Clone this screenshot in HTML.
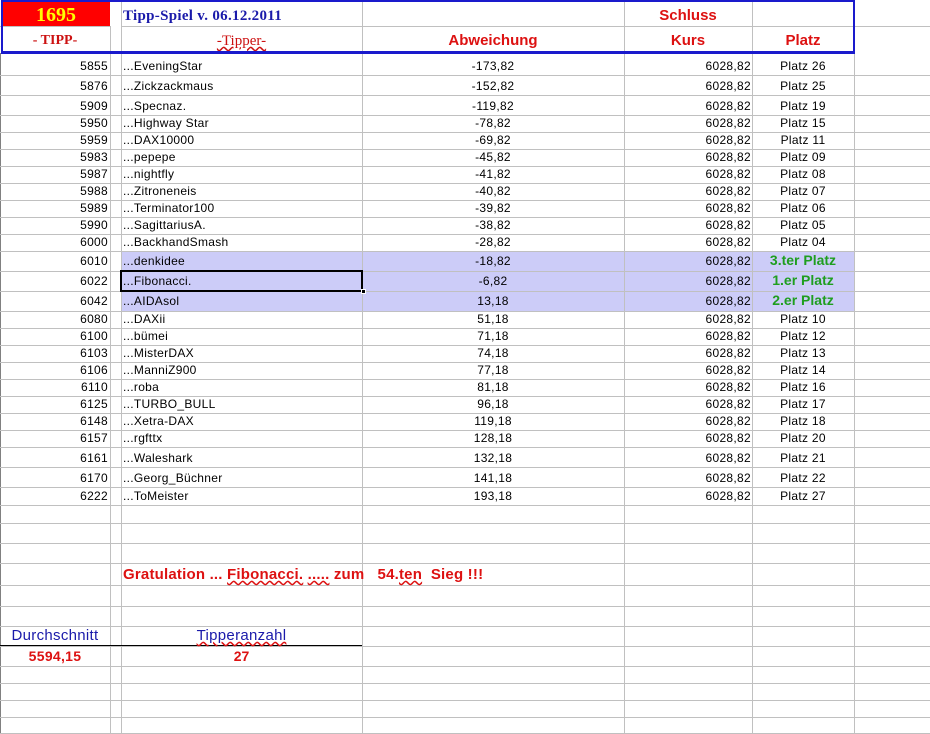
<!DOCTYPE html>
<html><head><meta charset="utf-8">
<style>
*{margin:0;padding:0;box-sizing:border-box}
body{width:930px;height:734px;background:#fff;position:relative;overflow:hidden;font-family:"Liberation Sans",Arial,sans-serif;font-size:12px;color:#000}
.h{position:absolute;left:0;width:930px;height:1px;background:#c0c0c0}
.v{position:absolute;top:0;width:1px;height:734px;background:#c0c0c0}
.r{position:absolute;left:0;width:930px;letter-spacing:0.3px}
.r span{position:absolute;top:0;white-space:nowrap}
.a{left:0;width:108px;text-align:right}
.b{left:123px}
.c{left:362px;width:262px;text-align:center}
.d{left:624px;width:127px;text-align:right}
.e{left:752px;width:102px;text-align:center}
.g{color:#1f9e1f;font-weight:bold;font-size:14px;letter-spacing:0}
.hl{position:absolute;left:121px;top:251px;width:733px;height:60px;background:#ccccf8}
</style></head><body>
<div class="hl"></div>
<div class="v" style="left:110px"></div>
<div class="v" style="left:121px"></div>
<div class="v" style="left:362px"></div>
<div class="v" style="left:624px"></div>
<div class="v" style="left:752px"></div>
<div class="v" style="left:854px"></div>
<div class="v" style="left:0;background:#808080"></div>

<div class="h" style="top:26px"></div>
<div class="h" style="top:75px"></div><div class="h" style="top:95px"></div><div class="h" style="top:115px"></div>
<div class="h" style="top:132px"></div><div class="h" style="top:149px"></div><div class="h" style="top:166px"></div>
<div class="h" style="top:183px"></div><div class="h" style="top:200px"></div><div class="h" style="top:217px"></div>
<div class="h" style="top:234px"></div><div class="h" style="top:251px"></div><div class="h" style="top:271px"></div>
<div class="h" style="top:291px"></div><div class="h" style="top:311px"></div><div class="h" style="top:328px"></div>
<div class="h" style="top:345px"></div><div class="h" style="top:362px"></div><div class="h" style="top:379px"></div>
<div class="h" style="top:396px"></div><div class="h" style="top:413px"></div><div class="h" style="top:430px"></div>
<div class="h" style="top:447px"></div><div class="h" style="top:467px"></div><div class="h" style="top:487px"></div>
<div class="h" style="top:505px"></div><div class="h" style="top:523px"></div><div class="h" style="top:543px"></div>
<div class="h" style="top:563px"></div><div class="h" style="top:585px"></div><div class="h" style="top:606px"></div>
<div class="h" style="top:626px"></div><div class="h" style="top:666px"></div><div class="h" style="top:683px"></div>
<div class="h" style="top:700px"></div><div class="h" style="top:717px"></div><div class="h" style="top:733px"></div>
<div class="h" style="top:646px"></div>
<div style="position:absolute;left:0;top:645px;width:362px;height:1px;background:#000"></div>

<!-- header -->
<div style="position:absolute;left:0;top:0;width:855px;height:53px;background:#fff"></div>
<div style="position:absolute;left:121px;top:26px;width:734px;height:1px;background:#c0c0c0"></div>
<div style="position:absolute;left:0;top:26px;width:110px;height:1px;background:#c0c0c0"></div>
<div style="position:absolute;left:110px;top:26px;width:1px;height:27px;background:#c0c0c0"></div>
<div style="position:absolute;left:121px;top:0;width:1px;height:53px;background:#c0c0c0"></div>
<div style="position:absolute;left:362px;top:0;width:1px;height:53px;background:#c0c0c0"></div>
<div style="position:absolute;left:624px;top:0;width:1px;height:53px;background:#c0c0c0"></div>
<div style="position:absolute;left:752px;top:0;width:1px;height:53px;background:#c0c0c0"></div>
<div style="position:absolute;left:2px;top:2px;width:108px;height:24px;background:#ff0000;color:#ffff00;font:bold 20px 'Liberation Serif',serif;text-align:center;line-height:26px">1695</div>
<div style="position:absolute;left:123px;top:3px;color:#1a1aaa;font:bold 15px 'Liberation Serif',serif;line-height:26px;letter-spacing:0.3px">Tipp-Spiel v. 06.12.2011</div>
<div style="position:absolute;left:624px;top:3px;width:128px;text-align:center;color:#dd1111;font:bold 15px 'Liberation Sans',sans-serif;line-height:26px">Schluss</div>
<div style="position:absolute;left:0;top:28px;width:110px;text-align:center;color:#cc1111;font:bold 14px 'Liberation Serif',serif;line-height:26px">- TIPP-</div>
<div style="position:absolute;left:121px;top:28px;width:241px;text-align:center;color:#cc1111;font:15px 'Liberation Serif',serif;line-height:26px;text-decoration:underline wavy #cc1111">-Tipper-</div>
<div style="position:absolute;left:362px;top:28px;width:262px;text-align:center;color:#dd1111;font:bold 15px 'Liberation Sans',sans-serif;line-height:26px">Abweichung</div>
<div style="position:absolute;left:624px;top:28px;width:128px;text-align:center;color:#dd1111;font:bold 15px 'Liberation Sans',sans-serif;line-height:26px">Kurs</div>
<div style="position:absolute;left:752px;top:28px;width:102px;text-align:center;color:#dd1111;font:bold 15px 'Liberation Sans',sans-serif;line-height:26px">Platz</div>
<div style="position:absolute;left:1px;top:0;width:854px;height:54px;border:2px solid #1a1acc;border-bottom-width:3px"></div>

<!-- data -->
<div class="r" style="top:57px;line-height:18px"><span class="a">5855</span><span class="b">...EveningStar</span><span class="c">-173,82</span><span class="d">6028,82</span><span class="e">Platz 26</span></div>
<div class="r" style="top:76px;line-height:20px"><span class="a">5876</span><span class="b">...Zickzackmaus</span><span class="c">-152,82</span><span class="d">6028,82</span><span class="e">Platz 25</span></div>
<div class="r" style="top:96px;line-height:20px"><span class="a">5909</span><span class="b">...Specnaz.</span><span class="c">-119,82</span><span class="d">6028,82</span><span class="e">Platz 19</span></div>
<div class="r" style="top:115px;line-height:17px"><span class="a">5950</span><span class="b">...Highway Star</span><span class="c">-78,82</span><span class="d">6028,82</span><span class="e">Platz 15</span></div>
<div class="r" style="top:132px;line-height:17px"><span class="a">5959</span><span class="b">...DAX10000</span><span class="c">-69,82</span><span class="d">6028,82</span><span class="e">Platz 11</span></div>
<div class="r" style="top:149px;line-height:17px"><span class="a">5983</span><span class="b">...pepepe</span><span class="c">-45,82</span><span class="d">6028,82</span><span class="e">Platz 09</span></div>
<div class="r" style="top:166px;line-height:17px"><span class="a">5987</span><span class="b">...nightfly</span><span class="c">-41,82</span><span class="d">6028,82</span><span class="e">Platz 08</span></div>
<div class="r" style="top:183px;line-height:17px"><span class="a">5988</span><span class="b">...Zitroneneis</span><span class="c">-40,82</span><span class="d">6028,82</span><span class="e">Platz 07</span></div>
<div class="r" style="top:200px;line-height:17px"><span class="a">5989</span><span class="b">...Terminator100</span><span class="c">-39,82</span><span class="d">6028,82</span><span class="e">Platz 06</span></div>
<div class="r" style="top:217px;line-height:17px"><span class="a">5990</span><span class="b">...SagittariusA.</span><span class="c">-38,82</span><span class="d">6028,82</span><span class="e">Platz 05</span></div>
<div class="r" style="top:234px;line-height:17px"><span class="a">6000</span><span class="b">...BackhandSmash</span><span class="c">-28,82</span><span class="d">6028,82</span><span class="e">Platz 04</span></div>
<div class="r" style="top:251px;line-height:20px"><span class="a">6010</span><span class="b">...denkidee</span><span class="c">-18,82</span><span class="d">6028,82</span><span class="e g" style="line-height:18px">3.ter Platz</span></div>
<div class="r" style="top:271px;line-height:20px"><span class="a">6022</span><span class="b">...Fibonacci.</span><span class="c">-6,82</span><span class="d">6028,82</span><span class="e g" style="line-height:18px">1.er Platz</span></div>
<div class="r" style="top:291px;line-height:20px"><span class="a">6042</span><span class="b">...AIDAsol</span><span class="c">13,18</span><span class="d">6028,82</span><span class="e g" style="line-height:18px">2.er Platz</span></div>
<div class="r" style="top:311px;line-height:17px"><span class="a">6080</span><span class="b">...DAXii</span><span class="c">51,18</span><span class="d">6028,82</span><span class="e">Platz 10</span></div>
<div class="r" style="top:328px;line-height:17px"><span class="a">6100</span><span class="b">...bümei</span><span class="c">71,18</span><span class="d">6028,82</span><span class="e">Platz 12</span></div>
<div class="r" style="top:345px;line-height:17px"><span class="a">6103</span><span class="b">...MisterDAX</span><span class="c">74,18</span><span class="d">6028,82</span><span class="e">Platz 13</span></div>
<div class="r" style="top:362px;line-height:17px"><span class="a">6106</span><span class="b">...ManniZ900</span><span class="c">77,18</span><span class="d">6028,82</span><span class="e">Platz 14</span></div>
<div class="r" style="top:379px;line-height:17px"><span class="a">6110</span><span class="b">...roba</span><span class="c">81,18</span><span class="d">6028,82</span><span class="e">Platz 16</span></div>
<div class="r" style="top:396px;line-height:17px"><span class="a">6125</span><span class="b">...TURBO_BULL</span><span class="c">96,18</span><span class="d">6028,82</span><span class="e">Platz 17</span></div>
<div class="r" style="top:413px;line-height:17px"><span class="a">6148</span><span class="b">...Xetra-DAX</span><span class="c">119,18</span><span class="d">6028,82</span><span class="e">Platz 18</span></div>
<div class="r" style="top:430px;line-height:17px"><span class="a">6157</span><span class="b">...rgfttx</span><span class="c">128,18</span><span class="d">6028,82</span><span class="e">Platz 20</span></div>
<div class="r" style="top:448px;line-height:20px"><span class="a">6161</span><span class="b">...Waleshark</span><span class="c">132,18</span><span class="d">6028,82</span><span class="e">Platz 21</span></div>
<div class="r" style="top:468px;line-height:20px"><span class="a">6170</span><span class="b">...Georg_Büchner</span><span class="c">141,18</span><span class="d">6028,82</span><span class="e">Platz 22</span></div>
<div class="r" style="top:487px;line-height:18px"><span class="a">6222</span><span class="b">...ToMeister</span><span class="c">193,18</span><span class="d">6028,82</span><span class="e">Platz 27</span></div>

<!-- selection -->
<div style="position:absolute;left:120px;top:270px;width:243px;height:22px;border:2px solid #000"></div>
<div style="position:absolute;left:361px;top:289px;width:5px;height:5px;background:#000;border:1px solid #fff"></div>

<div style="position:absolute;left:123px;top:565px;color:#dd1111;font:bold 15px 'Liberation Sans',sans-serif;line-height:20px;white-space:nowrap;letter-spacing:0.2px">Gratulation ... <span style="text-decoration:underline wavy #dd1111">Fibonacci.</span> <span style="text-decoration:underline wavy #dd1111">.....</span> zum &nbsp; 54.<span style="text-decoration:underline wavy #dd1111">ten</span> &nbsp;Sieg !!!</div>
<div style="position:absolute;left:0;top:627px;width:110px;text-align:center;color:#1a1aaa;font:15px 'Liberation Sans',sans-serif;line-height:18px;letter-spacing:0.3px">Durchschnitt</div>
<div style="position:absolute;left:121px;top:627px;width:241px;text-align:center;color:#1a1aaa;font:15px 'Liberation Sans',sans-serif;line-height:18px;letter-spacing:0.3px"><span style="text-decoration:underline wavy #dd1111">Tipperanzahl</span></div>
<div style="position:absolute;left:0;top:647px;width:110px;text-align:center;color:#dd1111;font:bold 14px 'Liberation Sans',sans-serif;line-height:18px;letter-spacing:0.3px">5594,15</div>
<div style="position:absolute;left:121px;top:647px;width:241px;text-align:center;color:#dd1111;font:bold 14px 'Liberation Sans',sans-serif;line-height:18px">27</div>
</body></html>
